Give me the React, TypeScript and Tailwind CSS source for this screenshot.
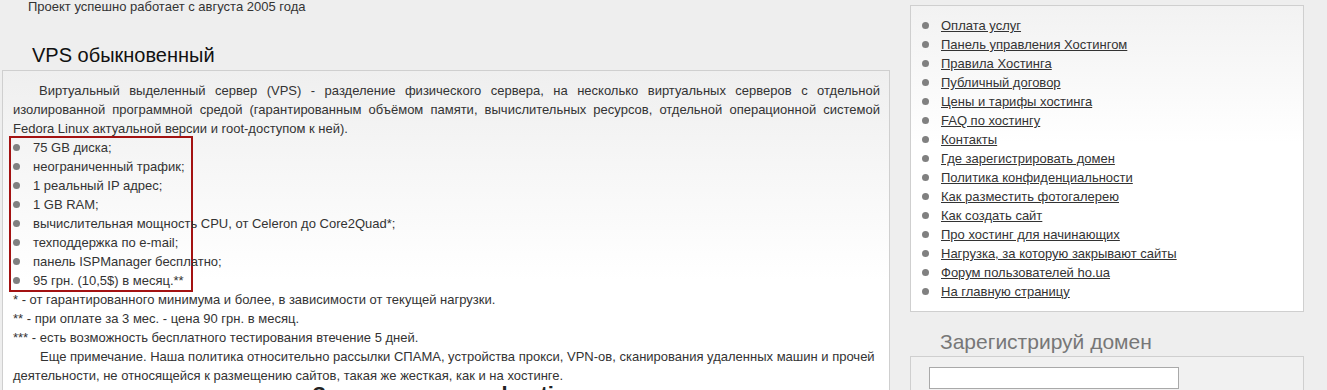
const features = [
  '75 GB диска;',
  'неограниченный трафик;',
  '1 реальный IP адрес;',
  '1 GB RAM;',
  'вычислительная мощность CPU, от Celeron до Core2Quad*;',
  'техподдержка по e-mail;',
  'панель ISPManager бесплатно;',
  '95 грн. (10,5$) в месяц.**',
];

const menu = [
  'Оплата услуг',
  'Панель управления Хостингом',
  'Правила Хостинга',
  'Публичный договор',
  'Цены и тарифы хостинга',
  'FAQ по хостингу',
  'Контакты',
  'Где зарегистрировать домен',
  'Политика конфиденциальности',
  'Как разместить фотогалерею',
  'Как создать сайт',
  'Про хостинг для начинающих',
  'Нагрузка, за которую закрывают сайты',
  'Форум пользователей ho.ua',
  'На главную страницу',
];

function Bullet() {
  return <span className="inline-block w-[7px] h-[7px] rounded-full bg-[#808080] shrink-0" />;
}

function App() {
  return (
    <div className="min-h-screen bg-[#eeeeee] text-[13px] text-[#333] font-['Liberation_Sans',Arial,sans-serif]">
      <div className="flex items-start">
        {/* основная колонка */}
        <div className="ml-[2px] w-[888px]">
          <p className="pl-[26px] leading-[13px]">Проект успешно работает с августа 2005 года</p>
          <h2 className="mt-[30px] pl-[30px] text-[20px] leading-[24px] text-[#111]">VPS обыкновенный</h2>
          <div className="mt-[3px] border border-[#cfcfcf] bg-gradient-to-b from-[#efefef] to-white to-[60%] pl-[10px] pr-[9px] pt-[10px] pb-4 leading-[19px]">
            <p className="text-justify indent-[26px]">
              Виртуальный выделенный сервер (VPS) - разделение физического сервера, на несколько виртуальных серверов с отдельной
              изолированной программной средой (гарантированным объёмом памяти, вычислительных ресурсов, отдельной операционной системой
              Fedora Linux актуальной версии и root-доступом к ней).
            </p>
            <ul className="-ml-[4px] -my-[2px] w-[184px] border-2 border-[#a31212]">
              {features.map((f) => (
                <li key={f} className="flex items-center whitespace-nowrap">
                  <span className="ml-[2px] mr-[13px] flex">
                    <Bullet />
                  </span>
                  {f}
                </li>
              ))}
            </ul>
            <p>* - от гарантированного минимума и более, в зависимости от текущей нагрузки.</p>
            <p>** - при оплате за 3 мес. - цена 90 грн. в месяц.</p>
            <p>*** - есть возможность бесплатного тестирования втечение 5 дней.</p>
            <p className="indent-[27px]">
              Еще примечание. Наша политика относительно рассылки СПАМА, устройства прокси, VPN-ов, сканирования удаленных машин и прочей
              деятельности, не относящейся к размещению сайтов, такая же жесткая, как и на хостинге.
            </p>
            <h3 className="text-center text-[22px] font-bold leading-[20px] text-[#222]">Заказ услуги vps hosting</h3>
          </div>
        </div>

        {/* правая колонка */}
        <div className="ml-[20px] w-[394px]">
          <div className="mt-[5px] border border-[#cfcfcf] bg-gradient-to-b from-[#f2f2f2] to-white to-[45%] pl-[11px] py-[10px] leading-[19px]">
            <ul>
              {menu.map((m) => (
                <li key={m} className="flex items-center">
                  <Bullet />
                  <a href="#" className="ml-[12px] underline text-[#333]">
                    {m}
                  </a>
                </li>
              ))}
            </ul>
          </div>
          <h3 className="mt-[18px] pl-[30px] text-[21px] leading-[24px] text-[#777]">Зарегистрируй домен</h3>
          <div className="mt-[2px] border border-[#cfcfcf] bg-[#f1f1f1] pl-[18px] pt-[10px] pb-4">
            <input type="text" className="block w-[250px] h-[22px] border border-[#a9a9a9] bg-white" />
          </div>
        </div>
      </div>
    </div>
  );
}

export default App;
